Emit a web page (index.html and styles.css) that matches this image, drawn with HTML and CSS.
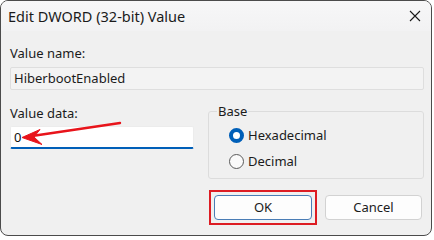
FILE: index.html
```html
<!DOCTYPE html>
<html>
<head>
<meta charset="utf-8">
<link rel="stylesheet" href="styles.css">
</head>
<body>
<div class="window">
  <div class="titlebar">
    <span class="title">Edit DWORD (32-bit) Value</span>
    <svg class="close" width="12" height="12" viewBox="0 0 12 12"><path d="M1 1L11 11M11 1L1 11" stroke="#1a1a1a" stroke-width="1.1" fill="none"/></svg>
  </div>
  <div class="content">
    <div class="label">Value name:</div>
    <div class="field readonly">HiberbootEnabled</div>
    <div class="row">
      <div class="datacol">
        <div class="label">Value data:</div>
        <div class="field data">0</div>
      </div>
      <fieldset class="group">
        <legend>Base</legend>
        <div class="radio"><span class="dot on"></span>Hexadecimal</div>
        <div class="radio"><span class="dot"></span>Decimal</div>
      </fieldset>
    </div>
    <div class="buttons">
      <div class="highlight"><div class="btn ok">OK</div></div>
      <div class="btn">Cancel</div>
    </div>
  </div>
  <svg class="arrow" width="434" height="236" viewBox="0 0 434 236">
    <line x1="120" y1="123" x2="32" y2="136" stroke="#e8141b" stroke-width="2.4" stroke-linecap="round"/>
    <path d="M22 137.5 L40 129.5 L34 137 L42 144.5 Z" fill="#e8141b" stroke="#e8141b" stroke-width="1" stroke-linejoin="round"/>
  </svg>
</div>
</body>
</html>
```
FILE: styles.css
```css
html, body {
  margin: 0;
  padding: 0;
  background: #ffffff;
}
body {
  font-family: "Noto Sans", "Open Sans", sans-serif;
  color: #1b1b1b;
}
.window {
  position: relative;
  box-sizing: border-box;
  width: 432px;
  height: 236px;
  border: 1px solid #4b4b4b;
  border-radius: 8px;
  background: #f0f0f0;
  overflow: hidden;
  display: flex;
  flex-direction: column;
}
.titlebar {
  height: 30px;
  flex: none;
  display: flex;
  align-items: center;
  justify-content: space-between;
  padding: 0 10px 0 7px;
  background: linear-gradient(#f7f7f8, #f2f2f3);
}
.title {
  font-size: 14.5px;
  margin-top: -1px;
}
.close {
  display: block;
}
.content {
  padding: 13px 7px 0 9px;
  font-size: 13px;
}
.label {
  line-height: 18px;
  margin-bottom: 5px;
}
.field {
  box-sizing: border-box;
  height: 23px;
  line-height: 21px;
  padding: 0 3px;
  border: 1px solid #dedede;
  border-radius: 2px;
}
.readonly {
  background: #f3f3f3;
  margin-bottom: 14px;
}
.row {
  display: flex;
  align-items: flex-start;
}
.datacol {
  width: 184px;
  flex: none;
}
.datacol .label {
  margin-bottom: 4px;
}
.data {
  background: #ffffff;
  border-color: #ececec;
  border-bottom: 2px solid #005fb8;
  line-height: 20px;
  color: #111;
}
.group {
  margin: -2px 0 0 14px;
  padding: 2px 0 4px 20px;
  border: 1px solid #dcdcdc;
  border-radius: 3px;
  width: 216px;
  box-sizing: border-box;
  flex: none;
}
.group legend {
  padding: 0 1px;
  margin-left: -12px;
  line-height: 18px;
  font-size: 13px;
}
.radio {
  display: flex;
  align-items: center;
  height: 26px;
}
.dot {
  box-sizing: border-box;
  width: 15px;
  height: 15px;
  border-radius: 50%;
  border: 1px solid #5a5a5a;
  background: #fafafa;
  margin-right: 4px;
  flex: none;
}
.dot.on {
  border: 4.5px solid #005fb8;
  background: #ffffff;
}
.buttons {
  display: flex;
  justify-content: flex-end;
  align-items: center;
  gap: 8px;
  margin-top: 11px;
  padding-right: 2px;
}
.highlight {
  border: 2px solid #dd1c23;
  padding: 3px;
}
.btn {
  box-sizing: border-box;
  width: 97px;
  height: 25px;
  line-height: 23px;
  text-align: center;
  background: #fdfdfd;
  border: 1px solid #d2d2d2;
  border-radius: 4px;
  font-size: 13px;
}
.btn.ok {
  width: 98px;
  border-color: #4a7db6;
}
.arrow {
  position: absolute;
  left: -1px;
  top: -1px;
  pointer-events: none;
}
```
